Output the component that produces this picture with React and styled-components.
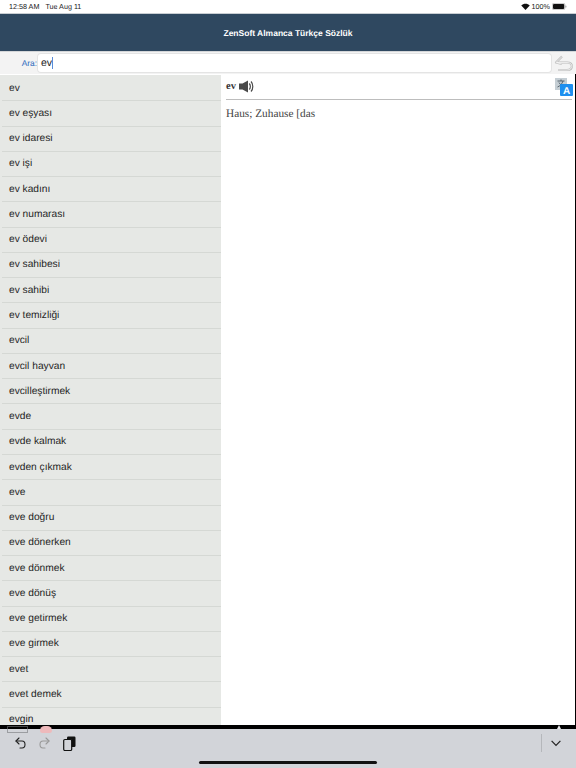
import React from 'react'
import styled, { createGlobalStyle } from 'styled-components'

const words = [
  'ev', 'ev eşyası', 'ev idaresi', 'ev işi', 'ev kadını', 'ev numarası', 'ev ödevi', 'ev sahibesi',
  'ev sahibi', 'ev temizliği', 'evcil', 'evcil hayvan', 'evcilleştirmek', 'evde', 'evde kalmak',
  'evden çıkmak', 'eve', 'eve doğru', 'eve dönerken', 'eve dönmek', 'eve dönüş', 'eve getirmek',
  'eve girmek', 'evet', 'evet demek', 'evgin',
]

const GlobalStyle = createGlobalStyle`
  html, body {
    margin: 0;
    padding: 0;
    overflow: hidden;
    background: #fff;
    text-rendering: geometricPrecision;
  }
`

const Page = styled.div`
  width: 576px;
  height: 768px;
  display: flex;
  flex-direction: column;
  font-family: "Liberation Sans", Arial, sans-serif;
  overflow: hidden;
`

const StatusBar = styled.div`
  height: 13px;
  padding: 0 9px;
  display: flex;
  align-items: center;
  justify-content: space-between;
  font-size: 7.2px;
  color: #222;
  background: #fff;
`

const StatusGroup = styled.div`
  display: flex;
  align-items: center;
  gap: ${p => p.gap}px;
`

const Header = styled.div`
  height: 38px;
  border-top: 1px solid #c9ced3;
  box-sizing: border-box;
  display: flex;
  align-items: center;
  justify-content: center;
  background: #2f4860;
  color: #fff;
  font-size: 8.5px;
  font-weight: bold;
`

const SearchBar = styled.div`
  height: 23px;
  display: flex;
  align-items: center;
  background: #f3f3f3;
  border-top: 1px solid #d4d6d8;
  box-sizing: border-box;
`

const SearchLabel = styled.label`
  width: 37px;
  box-sizing: border-box;
  text-align: right;
  font-size: 8.4px;
  color: #2a68bd;
`

const SearchInput = styled.div`
  width: 513px;
  height: 18px;
  margin-left: 1px;
  padding-left: 3px;
  box-sizing: border-box;
  display: flex;
  align-items: center;
  background: #fff;
  border-radius: 3px;
  box-shadow: 0 0 0 1px #e4e4e4;
  font-size: 10.5px;
  color: #222;
`

const Caret = styled.span`
  width: 1px;
  height: 12px;
  background: #5a8cd8;
`

const BackButton = styled.div`
  flex: 1;
  display: flex;
  justify-content: center;
`

const Main = styled.div`
  flex: 1;
  min-height: 0;
  display: flex;
  background: #fff;
  border-bottom: 4px solid #000;
`

const List = styled.div`
  width: 221px;
  margin-top: 1px;
  padding-top: 1px;
  overflow: hidden;
  background: #e6e8e5;
`

const Row = styled.div`
  height: 25.28px;
  box-sizing: border-box;
  margin-left: 2px;
  padding-left: 7px;
  display: flex;
  align-items: center;
  border-bottom: 1px solid #d5d8d4;
  font-size: 10.2px;
  color: #1f1f1f;
`

const Detail = styled.div`
  flex: 1;
  margin-left: 1px;
  padding: 0 3px 0 4px;
  border-right: 1px solid #000;
  position: relative;
  font-family: "Liberation Serif", "Times New Roman", serif;
`

const Headword = styled.div`
  height: 25px;
  display: flex;
  align-items: center;
  gap: 3px;
  border-bottom: 1px solid #bdbdbd;
  font-size: 10.5px;
  font-weight: bold;
  color: #333;
`

const Meaning = styled.div`
  margin-top: 8px;
  font-size: 11.3px;
  color: #444;
`

const TranslateBadge = styled.div`
  position: absolute;
  top: 4px;
  right: 2px;
`

const Toolbar = styled.div`
  height: 39px;
  padding: 5px 15px 0 15px;
  box-sizing: border-box;
  display: flex;
  align-items: flex-start;
  background: #d2d4d9;
  position: relative;
`

const ToolGroup = styled.div`
  display: flex;
  align-items: center;
  gap: 13px;
  flex: 1;
  height: 18px;
`

const ToolDivider = styled.div`
  width: 1px;
  height: 18px;
  margin-right: 9px;
  background: #b5b7bb;
`

const ChevronWrap = styled.div`
  height: 18px;
  display: flex;
  align-items: center;
`

const HomeBar = styled.div`
  position: absolute;
  left: 199px;
  bottom: 4px;
  width: 178px;
  height: 3px;
  border-radius: 2px;
  background: #111;
`

/* bits of the page behind the keyboard bar showing through */
const PeekBox = styled.div`
  position: absolute;
  left: 7px;
  top: -3px;
  width: 21px;
  height: 7px;
  box-sizing: border-box;
  border: 1px solid #77787c;
  opacity: 0.6;
`

const PeekDot = styled.div`
  position: absolute;
  left: 40px;
  top: -3px;
  width: 12px;
  height: 7px;
  border-radius: 6px 6px 3px 3px;
  background: #eeb9bb;
  filter: blur(0.7px);
`

const PeekNub = styled.div`
  position: absolute;
  left: 557px;
  top: -4px;
  width: 4px;
  height: 4px;
  background: #e8e8ea;
  clip-path: polygon(50% 0, 100% 100%, 0 100%);
`

const WifiIcon = () => (
  <svg width="9" height="7" viewBox="0 0 18 14">
    <path d="M9 14 L0.5 5 C5 0 13 0 17.5 5 Z" fill="#111" />
  </svg>
)

const BatteryIcon = () => (
  <svg width="15" height="7" viewBox="0 0 15 7">
    <rect x="0.3" y="0.3" width="12.6" height="6.4" rx="1.6" fill="none" stroke="#999" strokeWidth="0.6" />
    <rect x="1" y="1" width="11.2" height="5" rx="1" fill="#111" />
    <rect x="13.4" y="2.4" width="1" height="2.2" rx="0.5" fill="#999" />
  </svg>
)

const ReturnIcon = () => (
  <svg width="20" height="17" viewBox="0 0 20 17" fill="none" strokeLinejoin="round">
    <g stroke="#bcbcbc" strokeWidth="2.2">
      <path d="M8 1.5 L2 7.5 L8 9" />
      <path d="M3 7.5 H13 C19.5 7.5 19.5 15 13 15 H4" />
    </g>
    <g stroke="#fff" strokeWidth="0.7">
      <path d="M8 1.5 L2 7.5 L8 9" />
      <path d="M3 7.5 H13 C19.5 7.5 19.5 15 13 15 H4" />
    </g>
  </svg>
)

const SpeakerIcon = () => (
  <svg width="15" height="13" viewBox="0 0 15 13">
    <path d="M0 3.5 H3.5 L9 0.5 V12.5 L3.5 9.5 H0 Z" fill="#4a4a4a" />
    <path d="M10.3 3.5 C11.7 5 11.7 8 10.3 9.5 M12 1.5 C14.4 4 14.4 9 12 11.5" fill="none" stroke="#4a4a4a" strokeWidth="1.2" />
  </svg>
)

const TranslateIcon = () => (
  <svg width="18" height="18" viewBox="0 0 18 18">
    <rect x="0" y="0" width="12" height="12" fill="#c5ced4" />
    <path d="M2.5 3 H9.5 M6 1.5 V3 M8 3 C7 6 5 8 2.5 9 M4 4.5 C5 6.5 7 8 9.5 9" fill="none" stroke="#4c5a64" strokeWidth="0.9" />
    <rect x="5" y="6" width="13" height="12" rx="1" fill="#1e8fef" />
    <text x="11.5" y="16" fontSize="10" fontWeight="bold" fontFamily="Liberation Sans, sans-serif" textAnchor="middle" fill="#fff">A</text>
  </svg>
)

const UndoIcon = ({ color }) => (
  <svg width="11" height="12" viewBox="0 0 11 12" fill="none" stroke={color} strokeWidth="1.1" strokeLinecap="round" strokeLinejoin="round">
    <path d="M4 1 L1 4 L4 7" />
    <path d="M1 4 H7 C11 4 11 11 7 11 H5" />
  </svg>
)

const RedoIcon = ({ color }) => (
  <svg width="11" height="12" viewBox="0 0 11 12" fill="none" stroke={color} strokeWidth="1.1" strokeLinecap="round" strokeLinejoin="round">
    <path d="M7 1 L10 4 L7 7" />
    <path d="M10 4 H4 C0 4 0 11 4 11 H6" />
  </svg>
)

const PasteIcon = () => (
  <svg width="13" height="15" viewBox="0 0 13 15">
    <rect x="4" y="0.5" width="8.5" height="10.5" rx="1.2" fill="#111" />
    <rect x="0.7" y="3.5" width="8" height="11" rx="1.2" fill="#d2d4d9" stroke="#111" strokeWidth="1.2" />
  </svg>
)

const ChevronIcon = () => (
  <svg width="10" height="7" viewBox="0 0 10 7" fill="none" stroke="#222" strokeWidth="1.2">
    <path d="M0.6 0.8 L5 5.4 L9.4 0.8" />
  </svg>
)

const App = () => (
  <Page>
    <GlobalStyle />
    <StatusBar>
      <StatusGroup gap={6}>
        <span>12:58 AM</span>
        <span>Tue Aug 11</span>
      </StatusGroup>
      <StatusGroup gap={2}>
        <WifiIcon />
        <span>100%</span>
        <BatteryIcon />
      </StatusGroup>
    </StatusBar>
    <Header>ZenSoft Almanca Türkçe Sözlük</Header>
    <SearchBar>
      <SearchLabel>Ara:</SearchLabel>
      <SearchInput>ev<Caret /></SearchInput>
      <BackButton><ReturnIcon /></BackButton>
    </SearchBar>
    <Main>
      <List>
        {words.map(w => <Row key={w}>{w}</Row>)}
      </List>
      <Detail>
        <Headword>ev <SpeakerIcon /></Headword>
        <Meaning>Haus; Zuhause [das</Meaning>
        <TranslateBadge><TranslateIcon /></TranslateBadge>
      </Detail>
    </Main>
    <Toolbar>
      <PeekBox />
      <PeekDot />
      <PeekNub />
      <ToolGroup>
        <UndoIcon color="#222" />
        <RedoIcon color="#999" />
        <PasteIcon />
      </ToolGroup>
      <ToolDivider />
      <ChevronWrap><ChevronIcon /></ChevronWrap>
      <HomeBar />
    </Toolbar>
  </Page>
)

export default App
